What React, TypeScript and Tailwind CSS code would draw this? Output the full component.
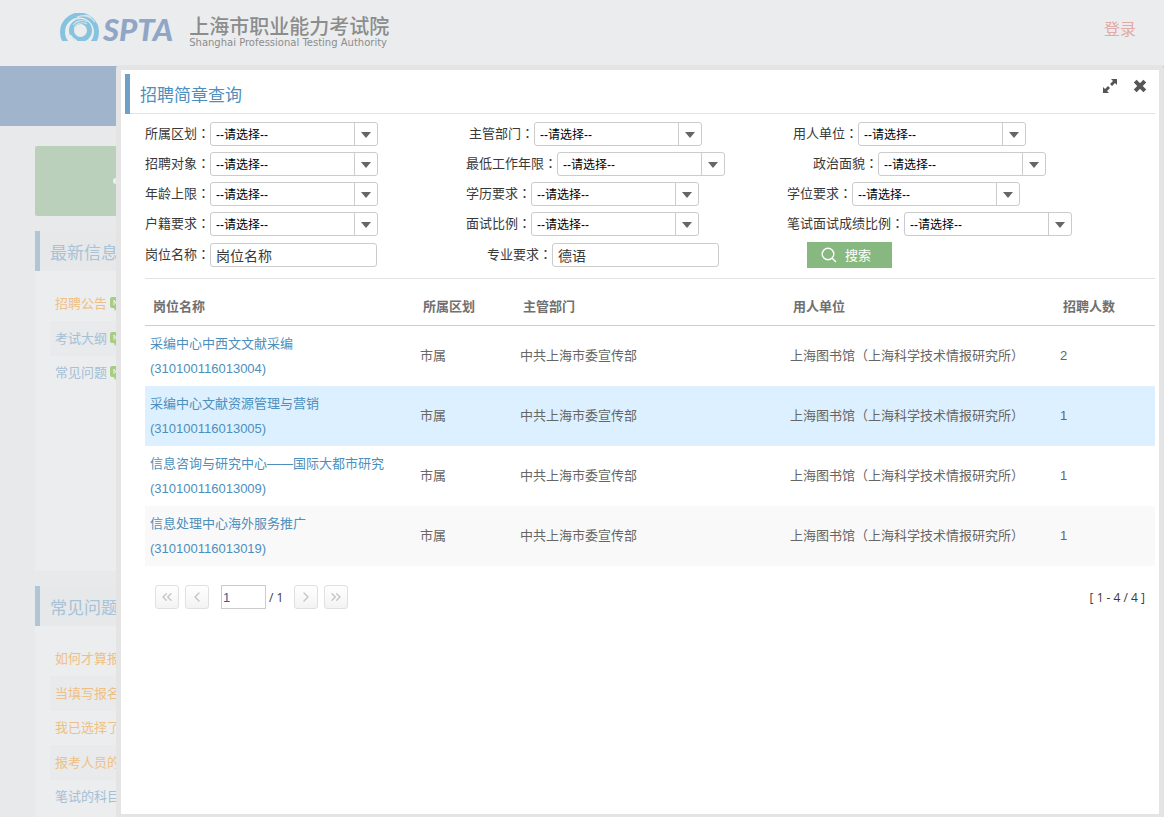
import { ChevronLeft, ChevronRight, ChevronsLeft, ChevronsRight } from 'lucide-react';
import clsx from 'clsx';

type Field = { id: string; label: string; value?: string; indent?: boolean };

const filterRows: { wide?: boolean; fields: Field[] }[] = [
  {
    wide: true,
    fields: [
      { id: 'area', label: '所属区划' },
      { id: 'dept', label: '主管部门' },
      { id: 'unit', label: '用人单位' },
    ],
  },
  {
    fields: [
      { id: 'target', label: '招聘对象' },
      { id: 'years', label: '最低工作年限' },
      { id: 'politics', label: '政治面貌' },
    ],
  },
  {
    fields: [
      { id: 'age', label: '年龄上限' },
      { id: 'education', label: '学历要求' },
      { id: 'degree', label: '学位要求' },
    ],
  },
  {
    fields: [
      { id: 'household', label: '户籍要求' },
      { id: 'interview', label: '面试比例' },
      { id: 'score', label: '笔试面试成绩比例' },
    ],
  },
];

const jobs = [
  { name: '采编中心中西文文献采编', code: '310100116013004', count: 2 },
  { name: '采编中心文献资源管理与营销', code: '310100116013005', count: 1, active: true },
  { name: '信息咨询与研究中心——国际大都市研究', code: '310100116013009', count: 1 },
  { name: '信息处理中心海外服务推广', code: '310100116013019', count: 1 },
];

const news = [
  { text: '招聘公告', hot: true },
  { text: '考试大纲' },
  { text: '常见问题' },
];

const questions = [
  { text: '如何才算报名成功', hot: true },
  { text: '当填写报名信息时', hot: true },
  { text: '我已选择了岗位', hot: true },
  { text: '报考人员的条件', hot: true },
  { text: '笔试的科目有哪些' },
];

function Logo() {
  return (
    <div className="flex items-start">
      <svg viewBox="0 0 39 28" className="h-7 w-[39px]" fill="none">
        <circle cx="19.5" cy="19" r="17" stroke="#86c3df" strokeWidth="5" />
        <path d="M17 4c6-2 13-1 18 5M15 7C19 2 27 1 32 4" stroke="#d3e3ea" strokeWidth="1.2" />
        <circle cx="20.5" cy="17.5" r="9" stroke="#86c3df" strokeWidth="5" />
        <path d="M14 16c1-5 7-8 13-5M13 12c3-4 9-6 14-3" stroke="#d3e3ea" strokeWidth="1.1" />
        <path d="M10 22c2 3 4 5 7 6" stroke="#ebecee" strokeWidth="1.4" />
      </svg>
      <span className="ml-1 font-[Lato,sans-serif] text-[31px] font-black italic leading-8 text-[#8fa6c6]">SPTA</span>
      <div className="ml-4 flex flex-col whitespace-nowrap pt-1 text-[#8c8c8c]">
        <span className="text-[20px] font-medium leading-5">上海市职业能力考试院</span>
        <span className="font-['DejaVu_Sans',sans-serif] text-[10px] leading-3">
          Shanghai Professional Testing Authority
        </span>
      </div>
    </div>
  );
}

function NewBadge() {
  return (
    <svg viewBox="0 0 24 14" className="h-[14px] w-6">
      <path d="M2 0h20a2 2 0 0 1 2 2v7a2 2 0 0 1-2 2H7l-2 3-1-3H2a2 2 0 0 1-2-2V2a2 2 0 0 1 2-2z" fill="#a6cd82" />
      <path d="M4 8V3l3 5V3M13 3h-3v5h3M10 5h3M15 3l1 5 2-4 1 4 1-5" stroke="#eef3ea" fill="none" />
    </svg>
  );
}

function SidePanel({ title, items, badge }: { title: string; items: { text: string; hot?: boolean }[]; badge?: boolean }) {
  return (
    <section className="flex w-[250px] flex-col">
      <h2 className="h-10 border-l-[5px] border-[#b0c6d6] bg-[#e6e8e9] pl-[10px] text-[17px] leading-[46px] text-[#a8c2d6]">
        {title}
      </h2>
      <ul className="min-h-[300px] bg-[#ebedee] px-[15px] pt-4">
        {items.map((item, i) => (
          <li
            key={item.text}
            className={clsx('flex items-center gap-[3px] px-[5px]', i % 2 === 1 ? 'h-[35px] bg-[#e8eaeb]' : 'h-[34px]')}
          >
            <a href="#" className={item.hot ? 'text-[#efc085]' : 'text-[#a5bfd5]'}>
              {item.text}
            </a>
            {badge && <NewBadge />}
          </li>
        ))}
      </ul>
    </section>
  );
}

function Label({ field }: { field: Field }) {
  return (
    <label htmlFor={field.id} className="whitespace-nowrap leading-[22px] text-[#393939]">
      {field.label}
      <span className="font-['Noto_Sans_CJK_TC',sans-serif]">：</span>
    </label>
  );
}

function SelectField({ field }: { field: Field }) {
  return (
    <div className="flex shrink-0 items-start">
      <Label field={field} />
      <div className="relative h-6 w-[168px]">
        <select
          id={field.id}
          className="h-6 w-full appearance-none rounded-[3px] border border-[#cccccc] bg-white pl-[5px] pr-6 pt-px text-[12px] text-black"
        >
          <option>--请选择--</option>
        </select>
        <span className="pointer-events-none absolute inset-y-0 right-0 flex w-6 items-center justify-center border-l border-[#cccccc] pr-px pt-[2px]">
          <svg viewBox="0 0 10 6" className="h-[6px] w-[10px]" fill="#666666">
            <path d="M0 0h10L5 6z" />
          </svg>
        </span>
      </div>
    </div>
  );
}

function TextField({ field }: { field: Field }) {
  return (
    <div className={clsx('flex shrink-0 items-start', field.indent && 'ml-[22px]')}>
      <Label field={field} />
      <input
        id={field.id}
        type="text"
        defaultValue={field.value}
        className="h-6 w-[167px] rounded-[3px] border border-[#cccccc] px-[5px] text-[14px] text-[#393939]"
      />
    </div>
  );
}

function PageButton({ label, icon: Icon }: { label: string; icon: typeof ChevronLeft }) {
  return (
    <button
      type="button"
      aria-label={label}
      className="flex h-6 w-6 items-center justify-center rounded-[3px] border border-[#e0e0e0] bg-linear-to-b from-white to-[#f3f3f3] text-[#c4c4c4]"
    >
      <Icon size={16} strokeWidth={2} />
    </button>
  );
}

function Filters() {
  return (
    <form className="flex flex-col gap-[6px] border-b border-[#e2e2e2] pb-[10px] pt-2" onSubmit={(e) => e.preventDefault()}>
      {filterRows.map((row, i) => (
        <div key={i} className={clsx('flex', row.wide ? 'gap-[91px]' : 'gap-[88px]')}>
          {row.fields.map((field) => (
            <SelectField key={field.id} field={field} />
          ))}
        </div>
      ))}
      <div className="flex items-center gap-[88px]">
        <TextField field={{ id: 'post', label: '岗位名称', value: '岗位名称' }} />
        <TextField field={{ id: 'major', label: '专业要求', value: '德语', indent: true }} />
        <button type="submit" className="flex h-[26px] w-[85px] shrink-0 items-center gap-2 bg-[#87b87f] pl-[14px] text-white">
          <svg viewBox="0 0 16 16" className="h-4 w-4" fill="none" stroke="currentColor" strokeWidth="1.4">
            <circle cx="7" cy="7" r="5.8" />
            <path d="M11.2 11.2L15 15" />
          </svg>
          <span className="pt-[2px]">搜索</span>
        </button>
      </div>
    </form>
  );
}

function JobTable() {
  return (
    <table className="mt-[10px] w-full table-fixed border-separate border-spacing-0 text-left text-[#666666]">
      <colgroup>
        <col className="w-[27%]" />
        <col className="w-[10%]" />
        <col className="w-[27%]" />
        <col className="w-[27%]" />
        <col className="w-[10%]" />
      </colgroup>
      <thead>
        <tr className="h-[37px] text-[#707070] [&>th]:border-b [&>th]:border-[#b9d3e4] [&>th]:px-2">
          <th>岗位名称</th>
          <th>所属区划</th>
          <th>主管部门</th>
          <th>用人单位</th>
          <th>招聘人数</th>
        </tr>
      </thead>
      <tbody>
        {jobs.map((job) => (
          <tr key={job.code} className={clsx('h-[60px]', job.active ? 'bg-[#dcf0ff]' : 'last:bg-[#f9f9f9]')}>
            <td className="px-[5px] leading-[25px]">
              <a href="#" className="text-[#4c8fbd]">
                {job.name}
                <br />({job.code})
              </a>
            </td>
            <td className="px-[5px]">市属</td>
            <td className="px-[5px]">中共上海市委宣传部</td>
            <td className="whitespace-nowrap px-[5px]">上海图书馆（上海科学技术情报研究所）</td>
            <td className="px-[5px]">{job.count}</td>
          </tr>
        ))}
      </tbody>
    </table>
  );
}

function Pager() {
  return (
    <div className="mt-[19px] flex items-center justify-between px-[10px] text-[12px] text-[#393939]">
      <div className="flex items-center gap-[6px]">
        <PageButton label="首页" icon={ChevronsLeft} />
        <PageButton label="上一页" icon={ChevronLeft} />
        <div className="flex items-center gap-[3px] pl-[6px]">
          <input aria-label="页码" defaultValue="1" className="h-6 w-[45px] border border-[#cccccc] px-px pt-px text-[13px] text-[#336199]" />
          <span className="w-[19px] pt-[2px] font-['Open_Sans',sans-serif]">/ 1</span>
        </div>
        <PageButton label="下一页" icon={ChevronRight} />
        <PageButton label="末页" icon={ChevronsRight} />
      </div>
      <span className="pt-[2px] font-['Open_Sans',sans-serif]">[ 1 - 4 / 4 ]</span>
    </div>
  );
}

function SearchDialog() {
  return (
    <div className="fixed inset-0 flex pl-[116px] pt-[65px]">
      <div
        role="dialog"
        aria-labelledby="dialog-title"
        className="min-w-0 flex-1 overflow-auto rounded-t-[4px] border-[5px] border-b-[3px] border-[#e4e4e4] bg-white p-1"
      >
        <div className="flex h-10 items-start justify-between border-b border-[#e2e2e2]">
          <h1 id="dialog-title" className="h-10 border-l-[5px] border-[#6fa0c8] pl-[10px] text-[17px] leading-[44px] text-[#4c8fbd]">
            招聘简章查询
          </h1>
          <div className="flex gap-4 pr-2 pt-[5px] text-[#555555]">
            <button type="button" aria-label="最大化">
              <svg viewBox="0 0 14 14" className="h-[14px] w-[14px]" fill="currentColor">
                <path d="M8 0h6v6l-2-2-3 3-2-2 3-3zM0 8l2 2 3-3 2 2-3 3 2 2H0z" />
              </svg>
            </button>
            <button type="button" aria-label="关闭">
              <svg viewBox="0 0 14 14" className="h-[14px] w-[14px]" fill="none" stroke="currentColor" strokeWidth="4">
                <path d="M2.2 2.2l9.6 9.6M11.8 2.2l-9.6 9.6" />
              </svg>
            </button>
          </div>
        </div>
        <div className="pl-5">
          <Filters />
          <JobTable />
          <Pager />
        </div>
      </div>
    </div>
  );
}

export default function App() {
  return (
    <div className="h-screen overflow-hidden bg-[#e7e9eb] font-['Liberation_Sans','Noto_Sans_CJK_SC',sans-serif] text-[13px]">
      <header className="flex h-[66px] items-start justify-between bg-[#ebecee] pl-[60px] pr-7 pt-[13px]">
        <Logo />
        <a href="#" className="pt-[5px] text-[16px] text-[#e2aaa4]">
          登录
        </a>
      </header>
      <div className="h-[60px] bg-[#a0b5cb]" />
      <main className="flex flex-col gap-[15px] px-[35px] pt-5">
        <div className="flex h-[70px] w-[250px] items-center rounded-[2px] bg-[#bbd0bb] pl-[78px]">
          <span className="h-[6px] w-[6px] rounded-full bg-[#ebedee]" />
        </div>
        <SidePanel title="最新信息" items={news} badge />
        <SidePanel title="常见问题" items={questions} />
      </main>
      <SearchDialog />
    </div>
  );
}
